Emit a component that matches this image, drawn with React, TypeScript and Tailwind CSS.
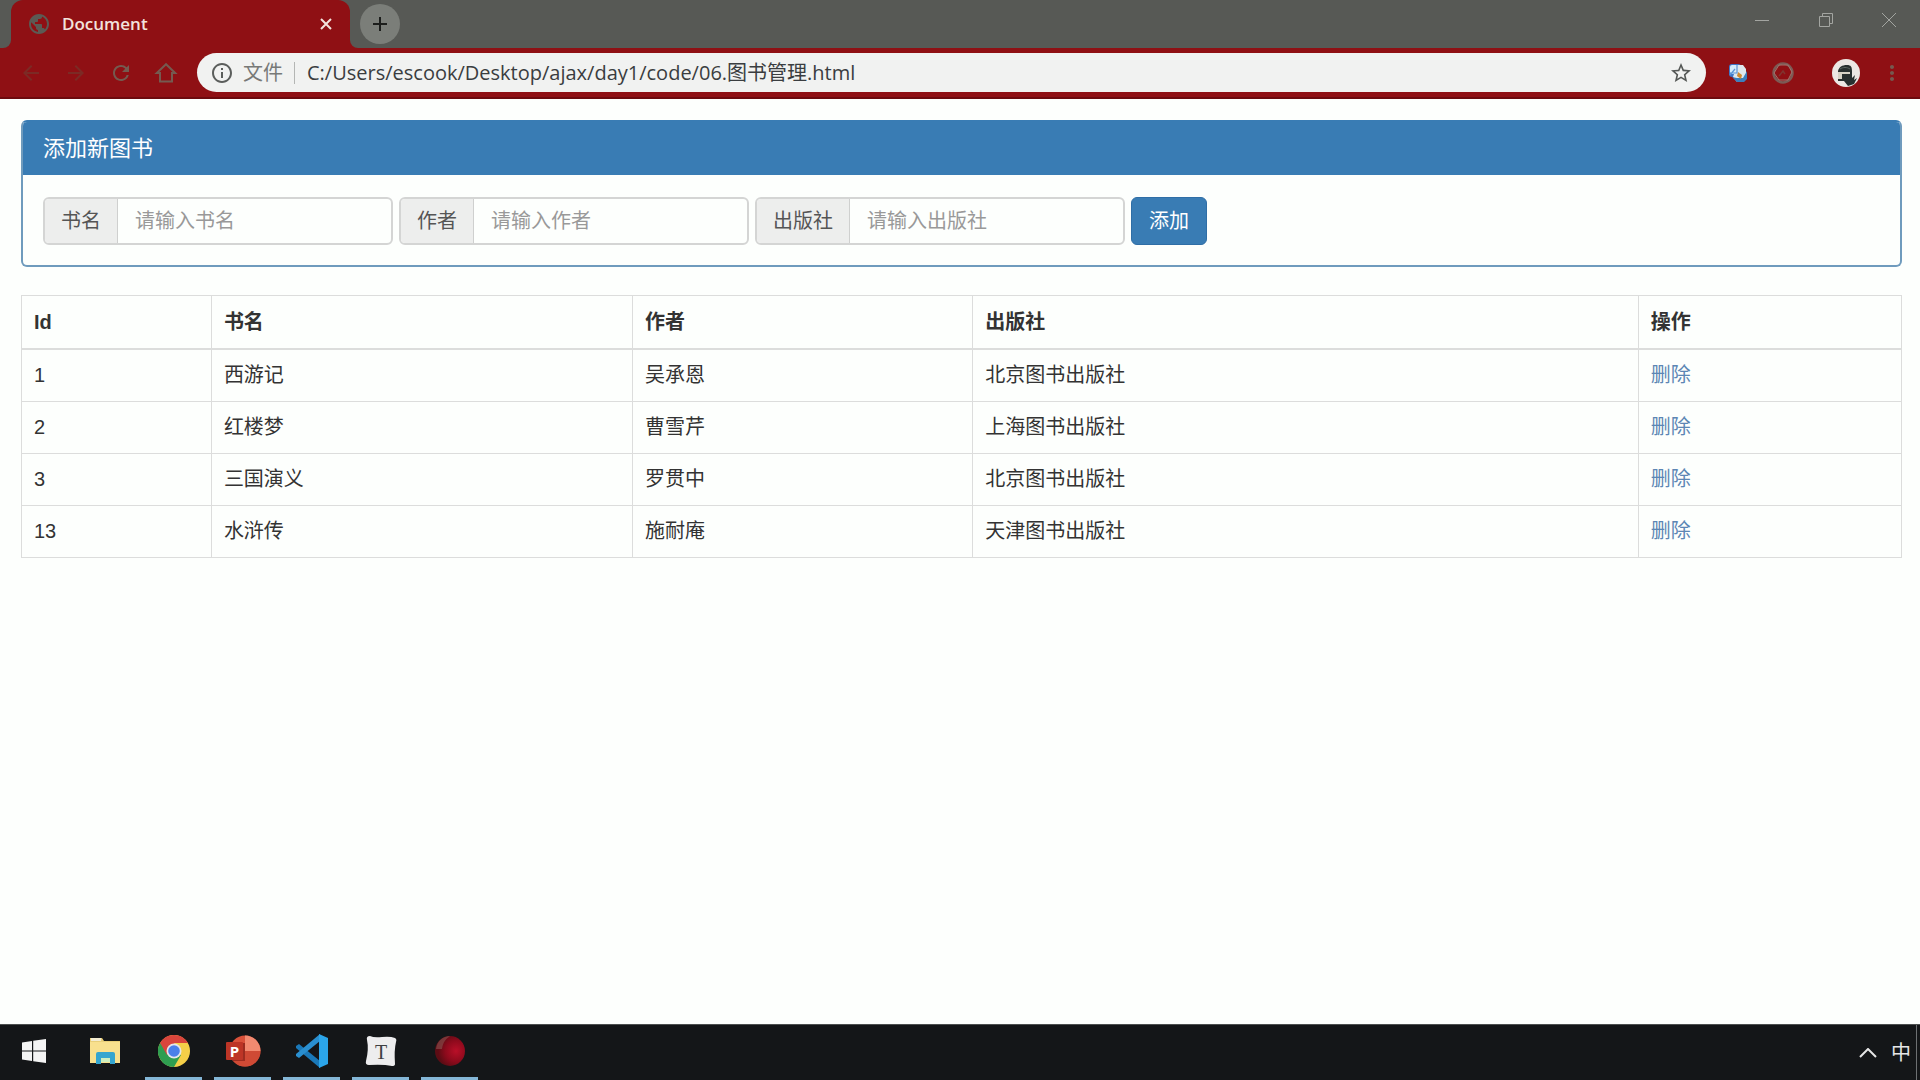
import type { ReactNode } from 'react'
import {
  MdAdd,
  MdArrowBack,
  MdArrowForward,
  MdMoreVert,
  MdOutlineInfo,
  MdPublic,
  MdRefresh,
  MdStarBorder,
} from 'react-icons/md'

const books = [
  { id: 1, name: '西游记', author: '吴承恩', publisher: '北京图书出版社' },
  { id: 2, name: '红楼梦', author: '曹雪芹', publisher: '上海图书出版社' },
  { id: 3, name: '三国演义', author: '罗贯中', publisher: '北京图书出版社' },
  { id: 13, name: '水浒传', author: '施耐庵', publisher: '天津图书出版社' },
]

const columns = [
  { title: 'Id', width: 'w-[10.1%]' },
  { title: '书名', width: 'w-[22.4%]' },
  { title: '作者', width: 'w-[18.1%]' },
  { title: '出版社', width: 'w-[35.4%]' },
  { title: '操作', width: 'w-[14%]' },
]

const fields = [
  { id: 'book-name', label: '书名', placeholder: '请输入书名' },
  { id: 'book-author', label: '作者', placeholder: '请输入作者' },
  { id: 'book-publisher', label: '出版社', placeholder: '请输入出版社' },
]

function HomeIcon() {
  return (
    <svg viewBox="0 0 24 24" className="size-6" fill="none" stroke="currentColor" strokeWidth="2">
      <path d="M12 3.2 2.8 12H6v8.6h12V12h3.2z" />
    </svg>
  )
}

function TranslateIcon() {
  return (
    <svg viewBox="0 0 20 20" className="size-5">
      <rect x="1" y="1" width="12" height="13" rx="3" fill="#3f76c8" />
      <rect x="2" y="2" width="9" height="9" rx="2" fill="#d3ebfb" />
      <path d="M9 2h6l3 4v10l-3 3H9l-4-5z" fill="#dfe8ee" />
      <path d="M19 8v8l-3 3H9l-5-5 5 1h6z" fill="#3c7fbd" />
      <path d="m10 9 4 3-1 4-4-3z" fill="#d08a30" />
      <path d="m2 12 5-6M9 2v8H2" fill="none" stroke="#5b94d6" strokeWidth="1.2" />
    </svg>
  )
}

function SwirlIcon() {
  return (
    <svg viewBox="0 0 24 24" className="size-6" fill="none" stroke="#7c5a55">
      <circle cx="12" cy="12" r="9.5" strokeWidth="2.500" />
      <path d="M8 4h9l4 7-4 8H8l-5-7z" stroke="#a3736d" strokeWidth="1" />
      <path d="m8 15 4-5 2 3" stroke="#803530" strokeWidth="1.5" />
    </svg>
  )
}

function Avatar() {
  return (
    <svg viewBox="0 0 28 28" className="size-7">
      <circle cx="14" cy="14" r="14" fill="#ece8e4" />
      <path d="M6 20V12c1-4 4-6 9-6 4 0 5 2 5 6v7l3-3-1 5 3-2-3 6-6 2-4-5H6z" fill="#27302f" />
      <path d="M6 13h12v2H10v5H6z" fill="#d6d3c6" />
      <path d="M8 10c3-2 7-2 10 0" fill="none" stroke="#5e6863" strokeWidth="1" />
    </svg>
  )
}

function BrowserTabs() {
  return (
    <div className="flex h-12 items-start bg-[#575955]">
      <div className="h-4 w-[11px] self-end bg-[#8f1014]">
        <div className="h-full rounded-br-lg bg-[#575955]" />
      </div>
      <div className="flex h-12 w-[339px] items-center rounded-t-xl bg-[#8f1014] px-4 text-[#f3e3dd]">
        <MdPublic className="size-6 text-[#5c5a54]" />
        <span className="ml-[11px] flex-1 font-['Open_Sans','Noto_Sans',sans-serif] text-[17px] font-semibold">
          Document
        </span>
        <button type="button" aria-label="Close tab">
          <svg viewBox="0 0 16 16" className="size-4" stroke="currentColor" strokeWidth="2">
            <path d="m3 3 10 10M13 3 3 13" />
          </svg>
        </button>
      </div>
      <div className="h-4 w-2 self-end bg-[#8f1014]">
        <div className="h-full rounded-bl-lg bg-[#575955]" />
      </div>
      <button
        type="button"
        aria-label="New tab"
        className="mt-1 ml-0.5 flex size-10 items-center justify-center rounded-full bg-[#7b7e79] text-[#1c1e1c]"
      >
        <MdAdd className="size-6" />
      </button>
      <div className="ml-auto flex text-[#a3a5a1]">
        <button type="button" aria-label="Minimize" className="flex h-10 w-16 items-center justify-center">
          <svg viewBox="0 0 14 14" className="size-[14px]" stroke="currentColor">
            <path d="M0 7.500h14" />
          </svg>
        </button>
        <button type="button" aria-label="Restore" className="flex h-10 w-16 items-center justify-center">
          <svg viewBox="0 0 14 14" className="size-[14px]" fill="none" stroke="currentColor">
            <path d="M.5 3.500h10v10H.5zM3.500 3.500v-3h10v10h-3" />
          </svg>
        </button>
        <button type="button" aria-label="Close" className="flex h-10 w-[62px] items-center justify-center">
          <svg viewBox="0 0 16 16" className="size-4" stroke="currentColor">
            <path d="m1 1 14 14M15 1 1 15" />
          </svg>
        </button>
      </div>
    </div>
  )
}

function Toolbar() {
  return (
    <div className="flex items-center border-b-2 border-[#6d0a0e] bg-[#8f1014] py-[5px] pr-4 pl-[19px] text-[#755a50]">
      <div className="flex gap-[21px]">
        <button type="button" aria-label="Back" className="text-[#7c2a25]">
          <MdArrowBack className="size-6" />
        </button>
        <button type="button" aria-label="Forward" className="text-[#7c2a25]">
          <MdArrowForward className="size-6" />
        </button>
        <button type="button" aria-label="Reload">
          <MdRefresh className="size-6" />
        </button>
        <button type="button" aria-label="Home">
          <HomeIcon />
        </button>
      </div>
      <div className="ml-[19px] flex h-[39px] flex-1 items-center rounded-full bg-[#f1f2f1] pr-[13px] pl-[13px] font-['Open_Sans','Noto_Sans_CJK_SC',sans-serif]">
        <MdOutlineInfo className="size-6 text-[#5b5e5c]" />
        <span className="ml-[9px] text-xl text-[#777977]">文件</span>
        <span className="mr-3 ml-[11px] h-[22px] w-px bg-[#b4b6b4]" />
        <input
          aria-label="Address"
          defaultValue="C:/Users/escook/Desktop/ajax/day1/code/06.图书管理.html"
          className="min-w-0 flex-1 bg-transparent text-xl text-[#3a3d40] outline-none"
        />
        <button type="button" aria-label="Bookmark">
          <MdStarBorder className="size-6 text-[#555856]" />
        </button>
      </div>
      <div className="ml-[22px] flex items-center">
        <TranslateIcon />
        <span className="ml-[23px]">
          <SwirlIcon />
        </span>
        <span className="ml-[37px]">
          <Avatar />
        </span>
        <button type="button" aria-label="Menu" className="ml-5">
          <MdMoreVert className="size-6" />
        </button>
      </div>
    </div>
  )
}

function BookForm() {
  return (
    <section className="overflow-hidden rounded-md border-2 border-[#6f9bbd] border-t-[#397cb4] text-xl">
      <h3 className="bg-[#397cb4] px-5 py-[10px] text-[22px] leading-[33px] text-white">添加新图书</h3>
      <form className="flex flex-wrap gap-[6px] px-5 pt-[22px] pb-5" onSubmit={(e) => e.preventDefault()}>
        {fields.map((field) => (
          <div key={field.id} className="flex h-12 overflow-hidden rounded-md border-2 border-[#d4d5d4]">
            <label
              htmlFor={field.id}
              className="flex items-center border-r border-[#cfd0cf] bg-[#edeeed] px-4 text-[#555]"
            >
              {field.label}
            </label>
            <input
              id={field.id}
              type="text"
              placeholder={field.placeholder}
              className="w-[273px] px-[17px] text-[#555] outline-none placeholder:text-[#999]"
            />
          </div>
        ))}
        <button type="submit" className="h-12 rounded-md border border-[#2f6ea6] bg-[#397cb4] px-[17px] text-white">
          添加
        </button>
      </form>
    </section>
  )
}

function BookTable() {
  return (
    <table className="mt-7 w-full table-fixed border-collapse text-left text-xl leading-7 text-[#333]">
      <thead>
        <tr>
          {columns.map((column) => (
            <th
              key={column.title}
              className={`border border-b-2 border-[#dcdddc] px-3 py-3 font-bold ${column.width}`}
            >
              {column.title}
            </th>
          ))}
        </tr>
      </thead>
      <tbody>
        {books.map((book) => (
          <tr key={book.id} className="h-[52px]">
            <td className="border border-[#dcdddc] px-3">{book.id}</td>
            <td className="border border-[#dcdddc] px-3">{book.name}</td>
            <td className="border border-[#dcdddc] px-3">{book.author}</td>
            <td className="border border-[#dcdddc] px-3">{book.publisher}</td>
            <td className="border border-[#dcdddc] px-3">
              <a href="#" className="text-[#5c86b4]">
                删除
              </a>
            </td>
          </tr>
        ))}
      </tbody>
    </table>
  )
}

function TaskButton({ label, open = false, children }: { label: string; open?: boolean; children: ReactNode }) {
  return (
    <button
      type="button"
      aria-label={label}
      className={`flex w-[57px] items-center justify-center border-b-[3px] ${
        open ? 'border-[#84b6d6]' : 'border-transparent'
      }`}
    >
      {children}
    </button>
  )
}

function Taskbar() {
  return (
    <footer className="flex h-14 border-t border-[#4c4f4f] bg-[#141618] pl-[5px]">
      <TaskButton label="Start">
        <svg viewBox="0 0 24 24" className="size-6" fill="#f4f4f4">
          <path d="M0 3.400 10 2v9.400H0zM11.200 1.800 24 0v11.400H11.200zM0 12.600h10V22L0 20.600zM11.200 12.600H24V24l-12.800-1.800z" />
        </svg>
      </TaskButton>
      <div className="ml-[14px] flex gap-3">
        <TaskButton label="File Explorer">
          <svg viewBox="0 0 32 28" className="h-7 w-8">
            <path d="M1 1h12l2 3h16v22H1z" fill="#e9cf78" />
            <path d="M1 5h30v21H1z" fill="#f8e08e" />
            <path d="M2 1h10v3H2z" fill="#f3ecd2" />
            <path d="M7 27V17q0-2 2-2h15q2 0 2 2v10h-5v-5h-9v5z" fill="#35a5cf" />
            <path d="M12 21h9v4h-9z" fill="#cdeec0" />
          </svg>
        </TaskButton>
        <TaskButton label="Chrome" open>
          <svg viewBox="0 0 32 32" className="size-8">
            <circle cx="16" cy="16" r="16" fill="#f5cf48" />
            <path d="M16 16 2.140 8A16 16 0 0 1 29.860 8z" fill="#d9453c" />
            <path d="M2.140 8A16 16 0 0 0 16 32l7-12-7-4z" fill="#2f9e50" />
            <path d="M16 8h13.860L23 20z" fill="#f5cf48" />
            <path d="M2.140 8 9 20l7-12z" fill="#d9453c" />
            <circle cx="16" cy="16" r="7.500" fill="#e6e6ea" />
            <circle cx="16" cy="16" r="5.800" fill="#4a80ea" />
          </svg>
        </TaskButton>
        <TaskButton label="PowerPoint" open>
          <svg viewBox="0 0 36 32" className="h-8 w-9">
            <circle cx="20" cy="16" r="15.500" fill="#d9513a" />
            <path d="M20 .5A15.500 15.500 0 0 1 35.500 16H20z" fill="#f28a70" />
            <path d="M4.500 16h31A15.500 15.500 0 0 1 4.500 16z" fill="#cf4a35" />
            <rect x="8" y="8" width="12" height="18" fill="#9c2c20" />
            <rect x="1" y="7" width="17" height="18" rx="1" fill="#bd3526" />
            <text x="9.500" y="21.500" textAnchor="middle" fill="#fff" fontSize="15" fontWeight="700" fontFamily="Open Sans">
              P
            </text>
          </svg>
        </TaskButton>
        <TaskButton label="Visual Studio Code" open>
          <svg viewBox="0 0 34 34" className="size-[34px]">
            <path d="m1 12 3-2 21 17v7L1 14z" fill="#1a78b8" />
            <path d="m1 22 3 2L25 7V0L1 20z" fill="#2a8fd0" />
            <path d="m24 0 9 4v26l-9 4z" fill="#2ba5ea" />
          </svg>
        </TaskButton>
        <TaskButton label="Typora" open>
          <svg viewBox="0 0 32 32" className="size-8">
            <path d="M5 1q4 2 12 1t13 1q2 1 1 4-2 8-1 22 0 2-3 2-9-2-23-1-4 0-3-4Q4 14 2 5q-1-4 3-4z" fill="#ededee" />
            <text x="16" y="23.500" textAnchor="middle" fill="#3e4042" fontSize="20" fontFamily="Liberation Serif">
              T
            </text>
          </svg>
        </TaskButton>
        <TaskButton label="Recorder" open>
          <svg viewBox="0 0 32 32" className="size-8">
            <defs>
              <radialGradient id="ball" cx="0.7" cy="0.5" r="0.6">
                <stop offset="0" stopColor="#b90f28" />
                <stop offset="0.6" stopColor="#8c0a1c" />
                <stop offset="1" stopColor="#5c0c14" />
              </radialGradient>
            </defs>
            <circle cx="16" cy="16" r="15" fill="url(#ball)" />
            <path d="M2 14C3 6 9 1 16 1c-4 3-7 6-8 13z" fill="#8a5350" opacity="0.6" />
          </svg>
        </TaskButton>
      </div>
      <div className="mr-[3px] ml-auto flex items-center border-r border-[#6d7072] pr-[5px] text-[#e6e6e6]">
        <svg viewBox="0 0 18 10" className="h-[10px] w-[18px]" fill="none" stroke="currentColor" strokeWidth="2">
          <path d="m1 9 8-8 8 8" />
        </svg>
        <span className="ml-[14px] text-xl">中</span>
      </div>
    </footer>
  )
}

export default function App() {
  return (
    <div className="flex min-h-screen flex-col bg-[#fdfffd] font-['Liberation_Sans','Noto_Sans_CJK_SC',sans-serif]">
      <header>
        <BrowserTabs />
        <Toolbar />
      </header>
      <main className="flex-1 pt-[21px] pr-[18px] pl-[21px]">
        <BookForm />
        <BookTable />
      </main>
      <Taskbar />
    </div>
  )
}
